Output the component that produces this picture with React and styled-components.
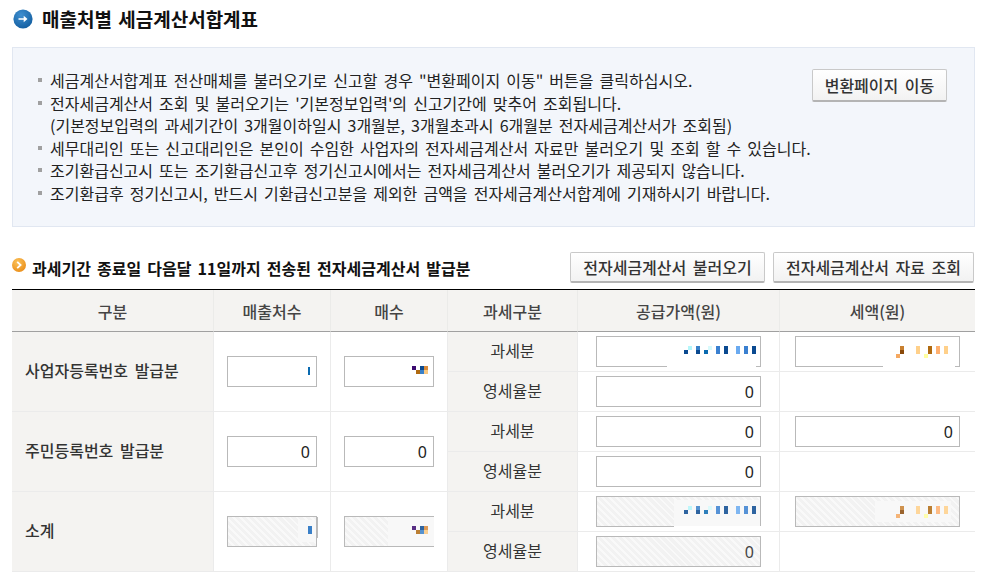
import React from "react";
import styled, { createGlobalStyle } from "styled-components";

const GlobalStyle = createGlobalStyle`
  html, body {
    margin: 0;
    padding: 0;
    background: #fff;
  }
  body {
    font-family: "Noto Sans CJK KR", "Noto Sans", sans-serif;
    color: #222;
  }
`;

const Page = styled.div`
  width: 963px;
  padding: 0 16px 0 12px;
`;

const TitleRow = styled.div`
  display: flex;
  align-items: center;
  gap: 9px;
  height: 37px;
  padding-left: 1px;
  margin-bottom: 10px;
`;

const Title = styled.h1`
  margin: 0;
  font-size: 19px;
  font-weight: 700;
  color: #111;
  word-spacing: 2px;
  line-height: 24px;
`;

const InfoBox = styled.div`
  display: flex;
  justify-content: space-between;
  align-items: flex-start;
  box-sizing: border-box;
  height: 180px;
  padding: 21px 27px 0 25px;
  background: #f3f6fb;
  border: 1px solid #e1e7f1;
`;

const InfoList = styled.ul`
  list-style: none;
  margin: 0;
  padding: 0;
`;

const InfoItem = styled.li`
  position: relative;
  padding-left: 12px;
  font-size: 16px;
  line-height: 22.6px;
  word-spacing: 2.5px;
  color: #222;
  white-space: nowrap;
  &::before {
    content: "";
    display: ${(p) => (p.$plain ? "none" : "block")};
    position: absolute;
    left: 0;
    top: 9px;
    width: 4px;
    height: 4px;
    background: #a0a0a0;
  }
`;

const Button = styled.button`
  box-sizing: border-box;
  height: ${(p) => p.$h}px;
  width: ${(p) => p.$w}px;
  padding: 0;
  font-family: inherit;
  font-size: 16px;
  font-weight: 500;
  color: #333;
  word-spacing: 3px;
  background: linear-gradient(#ffffff, #f2f2f2);
  border: 1px solid #c9c9c9;
  border-bottom: 2px solid #b4b4b4;
  border-radius: 2px;
  white-space: nowrap;
`;

const SectionHead = styled.div`
  display: flex;
  align-items: center;
  height: 31px;
  margin-top: 25px;
  margin-bottom: 6px;
  padding-right: 1px;
  gap: 8px;
`;

const SectionTitle = styled.h2`
  flex: 1;
  display: flex;
  align-items: center;
  gap: 6px;
  margin: 0;
  font-size: 16px;
  font-weight: 700;
  word-spacing: 2.5px;
  color: #111;
  white-space: nowrap;
`;

const Table = styled.table`
  width: 963px;
  table-layout: fixed;
  border-collapse: separate;
  border-spacing: 0;
  border-top: 1px solid #000;
`;

const Th = styled.th`
  box-sizing: border-box;
  height: 42px;
  padding: 0;
  font-size: 16px;
  font-weight: 500;
  color: #444;
  background: #f4f3f1;
  border-bottom: 1px solid #a0a0a0;
  border-right: 1px solid #ebebe9;
  &:last-child {
    border-right: 0;
  }
`;

const Label = styled.td`
  box-sizing: border-box;
  height: 40px;
  padding: ${(p) => (p.$left ? "0 0 4px 13px" : "0 0 4px")};
  font-size: 16px;
  font-weight: ${(p) => (p.$left ? 500 : 400)};
  word-spacing: 3px;
  line-height: 20px;
  text-align: ${(p) => (p.$left ? "left" : "center")};
  color: #333;
  background: #f4f3f1;
  border-bottom: 1px solid #ebebeb;
  border-right: 1px solid #ebebeb;
`;

const Cell = styled.td`
  box-sizing: border-box;
  height: 40px;
  padding: 0;
  text-align: center;
  background: #fff;
  border-bottom: 1px solid #ebebeb;
  border-right: ${(p) => (p.$last ? "0" : "1px solid #ebebeb")};
`;

const FieldWrap = styled.div`
  position: relative;
  width: ${(p) => p.$w}px;
  height: 31px;
  margin: 0 auto;
`;

const FieldInput = styled.input`
  display: block;
  box-sizing: border-box;
  width: 100%;
  height: 31px;
  padding: 0 6px 0 0;
  font-family: "Noto Sans", sans-serif;
  font-size: 16px;
  text-align: right;
  color: ${(p) => (p.$locked ? "#444" : "#222")};
  border: 1px solid #b9b9b9;
  border-radius: 0;
  outline: none;
  background: ${(p) =>
    p.$locked
      ? "repeating-linear-gradient(45deg, #f2f2f2 0 3px, #f9f9f9 3px 5px)"
      : "#fff"};
`;

const Redaction = styled.svg`
  position: absolute;
  left: 0;
  top: 0;
  overflow: visible;
  pointer-events: none;
`;

const ArrowBadge = ({ size, from, to }) => (
  <svg width={size} height={size} viewBox="0 0 20 20" aria-hidden="true">
    <defs>
      <radialGradient id="blueBadge" cx="40%" cy="30%" r="80%">
        <stop offset="0%" stopColor={from} />
        <stop offset="100%" stopColor={to} />
      </radialGradient>
    </defs>
    <circle cx="10" cy="10" r="9.6" fill="url(#blueBadge)" />
    <path d="M5.5 9.2h5.2V6.8l3.8 3.2-3.8 3.2v-2.4H5.5z" fill="#fff" />
  </svg>
);

const OrangeIcon = styled.svg`
  flex: none;
  margin-bottom: 6px;
`;

const ChevronBadge = () => (
  <OrangeIcon width="14" height="14" viewBox="0 0 14 14" aria-hidden="true">
    <defs>
      <radialGradient id="orangeBadge" cx="40%" cy="30%" r="80%">
        <stop offset="0%" stopColor="#fbc25a" />
        <stop offset="100%" stopColor="#e98a14" />
      </radialGradient>
    </defs>
    <circle cx="7" cy="7" r="7" fill="url(#orangeBadge)" />
    <path d="M5.2 3.8 8.6 7l-3.4 3.2" fill="none" stroke="#fff" strokeWidth="1.8" />
  </OrangeIcon>
);

// [x, y, w, h, colour], in px from the field's top-left corner
const BLUE_PIXELS = [
  [88, 14, 4, 4, "#0a4a90"],
  [92, 10, 4, 4, "#b4f6fa"],
  [100, 10, 4, 4, "#3a80c8"],
  [100, 14, 4, 4, "#0a4a90"],
  [108, 14, 4, 4, "#0a6ab0"],
  [112, 10, 4, 4, "#d8fafc"],
  [120, 10, 4, 8, "#3a80d0"],
  [128, 10, 4, 8, "#0a4a90"],
  [140, 10, 4, 8, "#6aaaf0"],
  [148, 10, 4, 8, "#3a80d0"],
  [156, 10, 4, 8, "#0a4a90"],
];

const ORANGE_PIXELS = [
  [105, 10, 4, 4, "#c88030"],
  [105, 14, 4, 4, "#8a4a0a"],
  [101, 18, 4, 4, "#f5a860"],
  [121, 10, 4, 8, "#ffd08a"],
  [129, 18, 4, 4, "#ffffa0"],
  [133, 10, 4, 8, "#b06a10"],
  [141, 10, 4, 8, "#ffb070"],
  [149, 10, 4, 8, "#ffd08a"],
];

const SHORT_PIXELS = [
  [68, 10, 4, 4, "#3c0a70"],
  [72, 14, 4, 4, "#b06a10"],
  [76, 10, 4, 4, "#0a4a90"],
  [76, 14, 4, 4, "#3a80c8"],
  [80, 10, 4, 4, "#d88a3a"],
  [80, 14, 4, 4, "#fac880"],
];

const SUPPLY_PATCH = [[71, 25, 89, 7, "#fff"]];
const TAX_PATCH = [[88, 25, 72, 7, "#fff"]];
const SUPPLY_LOCKED_PATCH = [
  [78, 4, 86, 27, "#f8f8f8"],
  [78, 30, 87, 2, "#fff"],
];
const TAX_LOCKED_PATCH = [[80, 5, 76, 21, "#f8f8f8"]];
const COUNT_LOCKED_PATCH = [[71, 4, 18, 22, "#f8f8f8"]];
const SHORT_LOCKED_PATCH = [[44, 1, 46, 29, "#f8f8f8"]];

// the locked row shows the same marks a little paler
const faded = (cells) => cells.map((cell) => [...cell, 0.85]);

const Field = ({ w, value = "", locked, marks }) => (
  <FieldWrap $w={w}>
    <FieldInput readOnly value={value} $locked={locked} />
    {marks && (
      <Redaction width={w} height="31" aria-hidden="true">
        {marks.map(([x, y, mw, mh, fill, opacity = 1]) => (
          <rect
            key={`${x}-${y}-${fill}`}
            x={x}
            y={y}
            width={mw}
            height={mh}
            fill={fill}
            opacity={opacity}
          />
        ))}
      </Redaction>
    )}
  </FieldWrap>
);

const NOTES = [
  { text: '세금계산서합계표 전산매체를 불러오기로 신고할 경우 "변환페이지 이동" 버튼을 클릭하십시오.' },
  { text: "전자세금계산서 조회 및 불러오기는 '기본정보입력'의 신고기간에 맞추어 조회됩니다." },
  { text: "(기본정보입력의 과세기간이 3개월이하일시 3개월분, 3개월초과시 6개월분 전자세금계산서가 조회됨)", plain: true },
  { text: "세무대리인 또는 신고대리인은 본인이 수임한 사업자의 전자세금계산서 자료만 불러오기 및 조회 할 수 있습니다." },
  { text: "조기환급신고시 또는 조기환급신고후 정기신고시에서는 전자세금계산서 불러오기가 제공되지 않습니다." },
  { text: "조기환급후 정기신고시, 반드시 기환급신고분을 제외한 금액을 전자세금계산서합계에 기재하시기 바랍니다." },
];

export default function App() {
  return (
    <Page>
      <GlobalStyle />
      <TitleRow>
        <ArrowBadge size={20} from="#3f8fd0" to="#0f5a9c" />
        <Title>매출처별 세금계산서합계표</Title>
      </TitleRow>

      <InfoBox>
        <InfoList>
          {NOTES.map((note) => (
            <InfoItem key={note.text} $plain={note.plain}>
              {note.text}
            </InfoItem>
          ))}
        </InfoList>
        <Button $w={135} $h={33}>변환페이지 이동</Button>
      </InfoBox>

      <SectionHead>
        <SectionTitle>
          <ChevronBadge />
          과세기간 종료일 다음달 11일까지 전송된 전자세금계산서 발급분
        </SectionTitle>
        <Button $w={195} $h={31}>전자세금계산서 불러오기</Button>
        <Button $w={201} $h={31}>전자세금계산서 자료 조회</Button>
      </SectionHead>

      <Table>
        <colgroup>
          <col style={{ width: 202 }} />
          <col style={{ width: 117 }} />
          <col style={{ width: 117 }} />
          <col style={{ width: 130 }} />
          <col style={{ width: 202 }} />
          <col style={{ width: 195 }} />
        </colgroup>
        <thead>
          <tr>
            <Th>구분</Th>
            <Th>매출처수</Th>
            <Th>매수</Th>
            <Th>과세구분</Th>
            <Th>공급가액(원)</Th>
            <Th>세액(원)</Th>
          </tr>
        </thead>
        <tbody>
          <tr>
            <Label $left rowSpan={2}>사업자등록번호 발급분</Label>
            <Cell rowSpan={2}>
              <Field w={90} marks={[[81, 11, 2, 8, "#0a6ab0"]]} />
            </Cell>
            <Cell rowSpan={2}>
              <Field w={90} marks={SHORT_PIXELS} />
            </Cell>
            <Label>과세분</Label>
            <Cell>
              <Field w={165} marks={[...SUPPLY_PATCH, ...BLUE_PIXELS]} />
            </Cell>
            <Cell $last>
              <Field w={165} marks={[...TAX_PATCH, ...ORANGE_PIXELS]} />
            </Cell>
          </tr>
          <tr>
            <Label>영세율분</Label>
            <Cell><Field w={165} value="0" /></Cell>
            <Cell $last />
          </tr>
          <tr>
            <Label $left rowSpan={2}>주민등록번호 발급분</Label>
            <Cell rowSpan={2}><Field w={90} value="0" /></Cell>
            <Cell rowSpan={2}><Field w={90} value="0" /></Cell>
            <Label>과세분</Label>
            <Cell><Field w={165} value="0" /></Cell>
            <Cell $last><Field w={165} value="0" /></Cell>
          </tr>
          <tr>
            <Label>영세율분</Label>
            <Cell><Field w={165} value="0" /></Cell>
            <Cell $last />
          </tr>
          <tr>
            <Label $left rowSpan={2}>소계</Label>
            <Cell rowSpan={2}>
              <Field
                w={90}
                locked
                marks={[...COUNT_LOCKED_PATCH, [81, 10, 4, 8, "#3a80c8"], [90, 1, 1, 21, "#bbb"]]}
              />
            </Cell>
            <Cell rowSpan={2}>
              <Field w={90} locked marks={[...SHORT_LOCKED_PATCH, ...faded(SHORT_PIXELS)]} />
            </Cell>
            <Label>과세분</Label>
            <Cell>
              <Field w={165} locked marks={[...SUPPLY_LOCKED_PATCH, ...faded(BLUE_PIXELS)]} />
            </Cell>
            <Cell $last>
              <Field w={165} locked marks={[...TAX_LOCKED_PATCH, ...faded(ORANGE_PIXELS)]} />
            </Cell>
          </tr>
          <tr>
            <Label>영세율분</Label>
            <Cell><Field w={165} value="0" locked /></Cell>
            <Cell $last />
          </tr>
        </tbody>
      </Table>
    </Page>
  );
}
